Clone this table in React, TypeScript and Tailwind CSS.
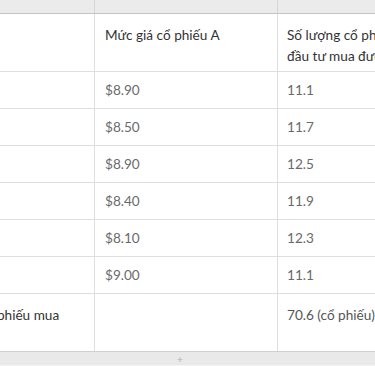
import React from "react";

const rows = [
  ["", "$8.90", "11.1"],
  ["", "$8.50", "11.7"],
  ["", "$8.90", "12.5"],
  ["", "$8.40", "11.9"],
  ["", "$8.10", "12.3"],
  ["", "$9.00", "11.1"],
];

export default function App() {
  return (
    <div
      className="w-[375px] h-[366px] overflow-hidden bg-white relative"
      style={{ fontFamily: "Lato, 'Open Sans', sans-serif" }}
    >
      <div className="ml-[-85px] w-[560px] flex flex-col text-[13.6px]">
        {/* column header bar */}
        <div className="flex h-[14px] bg-[#ebebeb] border-b-[1.5px] border-[#c4c4c4]">
          <div className="w-[180px] border-r border-[#d6d6d6]" />
          <div className="w-[183px] border-r border-[#d6d6d6]" />
          <div className="flex-1" />
        </div>
        {/* header row */}
        <div className="flex h-[58px] border-b border-[#dedede] text-[#333] leading-[21px]">
          <div className="w-[180px] border-r border-[#dedede]" />
          <div className="w-[183px] border-r border-[#dedede] pl-[10px] pt-[11px]">
            Mức giá cổ phiếu A
          </div>
          <div className="w-[150px] pl-[9px] pt-[11px]">
            Số lượng cổ phiếu nhà đầu tư mua được
          </div>
        </div>
        {rows.map((r, i) => (
          <div
            key={i}
            className="flex h-[37px] border-b border-[#dedede] text-[#6a6a6a] items-stretch"
          >
            <div className="w-[180px] border-r border-[#dedede]" />
            <div className="w-[183px] border-r border-[#dedede] pl-[10px] flex items-center">
              {r[1]}
            </div>
            <div className="flex-1 pl-[9px] flex items-center">{r[2]}</div>
          </div>
        ))}
        <div className="flex h-[57px] leading-[21px]">
          <div className="w-[180px] border-r border-[#dedede] pl-[15px] pt-[11px] text-[#333] whitespace-nowrap">
            Tổng số cổ phiếu mua
          </div>
          <div className="w-[183px] border-r border-[#dedede]" />
          <div className="flex-1 pl-[9px] pt-[11px] text-[#555]">70.6 (cổ phiếu)</div>
        </div>
        {/* bottom bar */}
        <div className="h-[14px] bg-[#e9e9e9] border-t border-[#d0d0d0] flex items-center justify-start">
          <div className="w-[262px]" />
          <span className="text-[10px] leading-none text-[#b0b0b0]">+</span>
        </div>
        <div className="h-[2px] bg-[#f4f4f4]" />
      </div>
    </div>
  );
}
